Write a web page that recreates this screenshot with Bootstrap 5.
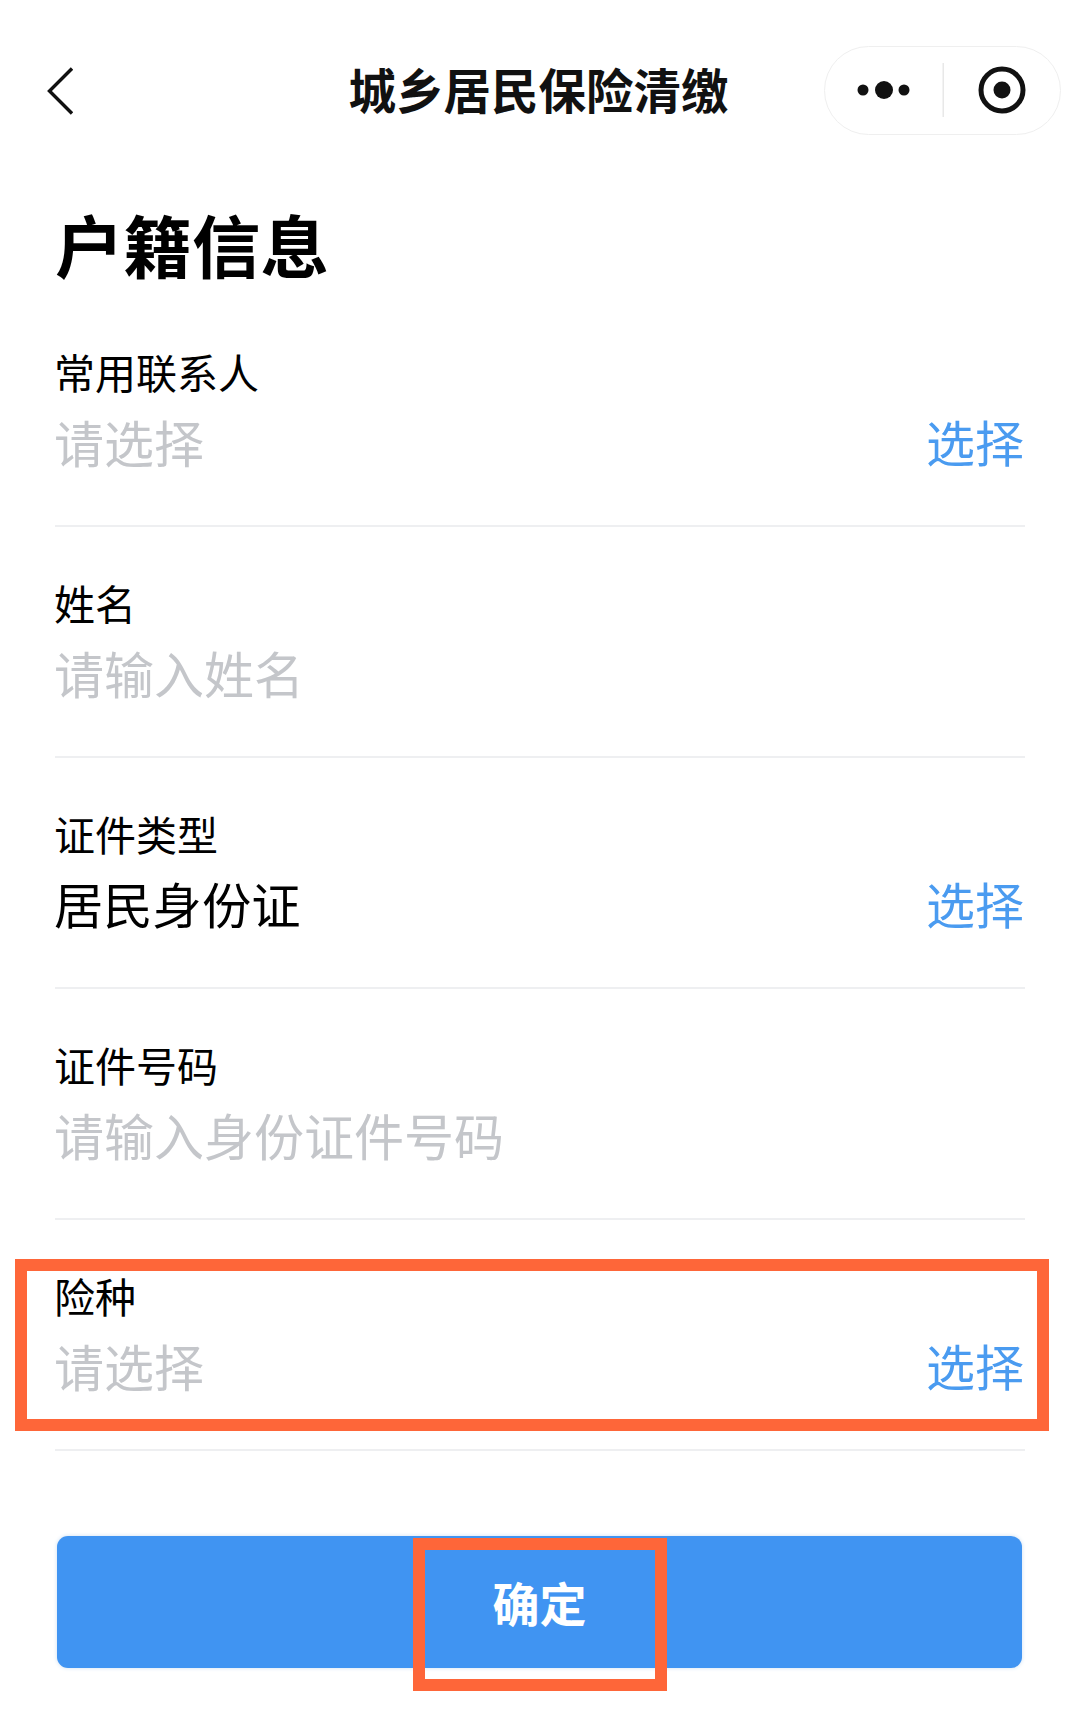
<!DOCTYPE html>
<html lang="zh-CN">
<head>
<meta charset="utf-8">
<title>户籍信息</title>
<link href="https://cdn.jsdelivr.net/npm/bootstrap@5.3.0/dist/css/bootstrap.min.css" rel="stylesheet">
<style>
html,body{margin:0;background:#fff}
body{font-family:"Noto Sans CJK SC","Liberation Sans",sans-serif;color:#000}
.phone{position:relative;width:1080px;height:1714px;overflow:hidden;background:#fff}
.topbar{display:grid;grid-template-columns:1fr auto 1fr;align-items:center;padding:46px 19px 0 16px}
.back-ic{display:block;margin-left:31px;width:26px;height:48px}
.page-title{font-size:47.500px;line-height:85px;font-weight:700;margin:0;color:#111;align-self:start}
.capsule{justify-self:end;width:237px;height:89px;border:1.500px solid #efefef;border-radius:45px;background:#fff}
.capsule svg{display:block}
.form-wrap{padding:0 55px}
.main-head{font-size:68.500px;line-height:90px;font-weight:700;margin:64px 0 0 0;color:#000}
.field{border-bottom:2px solid #eeeff1;padding:49.500px 0 49.400px}
.head-gap{height:7.500px}
.field-label{font-size:41px;line-height:50px;margin-bottom:10px;margin-left:-1px}
.field-value{font-size:50px;line-height:70px}
.is-set{font-size:49.300px;margin-left:-1px}
.is-empty{color:#c4c6ca;margin-left:-1px}
.pick-link{font-size:49px;line-height:70px;color:#4a9bf0;margin-right:1px}
.ok-btn{display:block;width:965px;height:132px;margin:85px 0 0 2px;background:#4094f2;border:0;border-radius:11px;box-shadow:0 0 4px #cfe0f2;color:#fff;font-size:47px;font-weight:700;line-height:132px;padding:0 0 4px}
.ok-btn:hover{background:#4094f2;color:#fff}
.mark-box{position:absolute;border:12.500px solid #fe6639;pointer-events:none}
.mark-a{left:15px;top:1259px;width:1034px;height:172px}
.mark-b{left:413px;top:1538px;width:254px;height:153px}
</style>
</head>
<body>
<div class="phone">
  <header class="topbar">
    <svg class="back-ic" viewBox="0 0 26 48" aria-hidden="true"><path d="M25 1.500 2.500 24 25 46.500" fill="none" stroke="#111" stroke-width="3.400"/></svg>
    <h1 class="page-title text-center">城乡居民保险清缴</h1>
    <div class="capsule">
      <svg width="234" height="86" viewBox="0 0 234 86" aria-hidden="true">
        <circle cx="38" cy="43" r="5.500" fill="#111"/><circle cx="59" cy="43" r="9" fill="#111"/><circle cx="79" cy="43" r="5.500" fill="#111"/>
        <rect x="117.500" y="16" width="1.500" height="54" fill="#e8e8e8"/>
        <circle cx="177" cy="43" r="21" fill="none" stroke="#111" stroke-width="5"/><circle cx="177" cy="43" r="8.500" fill="#111"/>
      </svg>
    </div>
  </header>
  <main class="form-wrap">
    <h2 class="main-head">户籍信息</h2>
    <div class="head-gap"></div>
    <section class="field">
      <div class="field-label">常用联系人</div>
      <div class="d-flex justify-content-between align-items-center"><span class="field-value is-empty">请选择</span><span class="pick-link">选择</span></div>
    </section>
    <section class="field">
      <div class="field-label">姓名</div>
      <div class="field-value is-empty">请输入姓名</div>
    </section>
    <section class="field">
      <div class="field-label">证件类型</div>
      <div class="d-flex justify-content-between align-items-center"><span class="field-value is-set">居民身份证</span><span class="pick-link">选择</span></div>
    </section>
    <section class="field">
      <div class="field-label">证件号码</div>
      <div class="field-value is-empty">请输入身份证件号码</div>
    </section>
    <section class="field">
      <div class="field-label">险种</div>
      <div class="d-flex justify-content-between align-items-center"><span class="field-value is-empty">请选择</span><span class="pick-link">选择</span></div>
    </section>
    <button type="button" class="btn btn-primary ok-btn">确定</button>
  </main>
  <div class="mark-box mark-a"></div>
  <div class="mark-box mark-b"></div>
</div>
<script src="https://cdn.jsdelivr.net/npm/bootstrap@5.3.0/dist/js/bootstrap.bundle.min.js"></script>
</body>
</html>
